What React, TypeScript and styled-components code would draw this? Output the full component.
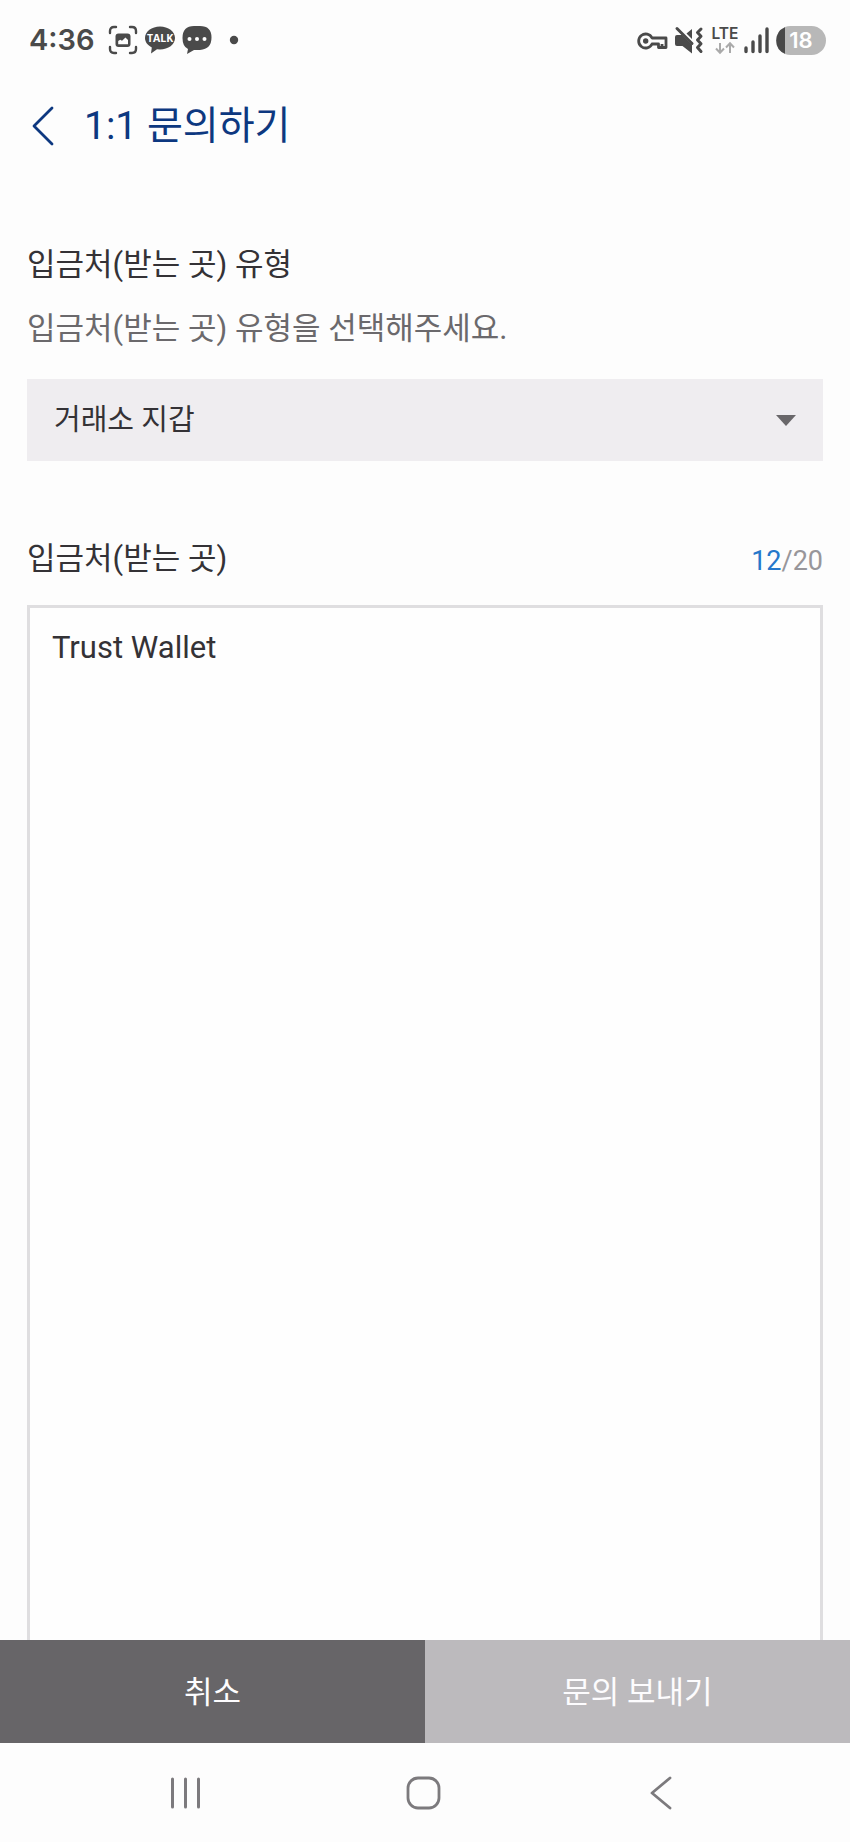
import { useState } from "react";
import styled, { createGlobalStyle } from "styled-components";

const GlobalStyle = createGlobalStyle`
  * { box-sizing: border-box; }
  body { margin: 0; background: #fdfdfd; }
  body, button, select, textarea {
    font-family: Roboto, "Noto Sans CJK KR", sans-serif;
  }
`;

const Screen = styled.div`
  display: flex;
  flex-direction: column;
  height: 100vh;
  color: #343236;
`;

const StatusBar = styled.div`
  display: flex;
  align-items: center;
  justify-content: space-between;
  height: 80px;
  padding: 0 24px 0 29px;
  color: #4a4a4a;
`;

const StatusGroup = styled.div<{ $gap: number }>`
  display: flex;
  align-items: center;
  gap: ${(p) => p.$gap}px;
  svg { display: block; }
`;

const Clock = styled.span`
  margin-right: 6px;
  font: 600 29px/40px Inter, sans-serif;
`;

const Header = styled.header`
  display: flex;
  align-items: center;
  gap: 24px;
  height: 92px;
  padding: 0 28px;
  color: #0d3880;
`;

const IconButton = styled.button`
  display: grid;
  place-items: center;
  padding: 0;
  border: 0;
  background: none;
  color: inherit;
  cursor: pointer;
`;

const Title = styled.h1`
  margin: 0;
  font-size: 39px;
  font-weight: 400;
  line-height: 56px;
`;

const Form = styled.form`
  display: flex;
  flex: 1;
  flex-direction: column;
  min-height: 0;
`;

const Fields = styled.div`
  display: flex;
  flex: 1;
  flex-direction: column;
  min-height: 0;
  padding: 73px 27px 0;
`;

const Label = styled.label`
  font-size: 31px;
  line-height: 40px;
`;

const Hint = styled.p`
  margin: 24px 0 30px;
  color: #6b696c;
  font-size: 31px;
  line-height: 40px;
`;

const SelectBox = styled.div`
  display: grid;
  align-items: center;
  margin-bottom: 76px;
  background: #efedf0;
  svg {
    grid-area: 1 / 1;
    justify-self: end;
    margin-right: 27px;
    pointer-events: none;
  }
`;

const Select = styled.select`
  grid-area: 1 / 1;
  width: 100%;
  height: 82px;
  padding: 0 60px 0 27px;
  border: 0;
  border-radius: 0;
  background: transparent;
  color: #343236;
  font-size: 29px;
  appearance: none;
`;

const LabelRow = styled.div`
  display: flex;
  align-items: center;
  justify-content: space-between;
  margin-bottom: 24px;
`;

const Counter = styled.span`
  padding-top: 4px;
  color: #98969a;
  font-size: 27px;
  line-height: 40px;
  b { color: #2577cb; font-weight: 400; }
`;

const TextArea = styled.textarea`
  flex: 1;
  width: 100%;
  min-height: 0;
  padding: 20px 22px;
  border: solid #dfdee0;
  border-width: 3px 3px 0;
  border-radius: 0;
  outline: 0;
  background: #fefefe;
  color: #343236;
  font-size: 31px;
  line-height: 40px;
  resize: none;
`;

const Actions = styled.div`
  display: grid;
  grid-template-columns: 1fr 1fr;
`;

const ActionButton = styled.button<{ $primary?: boolean }>`
  height: 103px;
  padding: 0 0 4px;
  border: 0;
  background: ${(p) => (p.$primary ? "#bcbabd" : "#676568")};
  color: #fdfcfe;
  font-size: 31px;
`;

const NavBar = styled.nav`
  display: flex;
  align-items: center;
  justify-content: space-between;
  height: 99px;
  padding: 0 168px 0 165px;
  color: #7c7a7d;
`;

const CaptureIcon = () => (
  <svg width="30" height="30" viewBox="0 0 30 30" fill="none" stroke="currentColor" strokeWidth="2.400" strokeLinecap="round">
    <path d="M2 8V6Q2 2 6 2H8M22 2h2q4 0 4 4v2M28 22v2q0 4-4 4h-2M8 28H6q-4 0-4-4v-2" />
    <rect x="7.500" y="8.500" width="15" height="13.500" rx="3" fill="currentColor" stroke="none" />
    <path d="M10.200 19.200v-3.200l2-1.300 1.800 1 3.500-3.200 2.500 2.500v4.200z" fill="#fdfdfd" stroke="none" />
  </svg>
);

const TalkIcon = () => (
  <svg width="30" height="30" viewBox="0 0 30 30">
    <path fill="currentColor" d="M15 1.500c8.300 0 15 5 15 11.500s-6.700 11.500-15 11.500l-3-.2-6 4.200.8-6.100C2.700 20.300 0 17 0 13 0 6.500 6.700 1.500 15 1.500z" />
    <text x="15" y="17" textAnchor="middle" fontFamily="Open Sans, sans-serif" fontWeight="700" fontSize="10.500" fill="#fff">TALK</text>
  </svg>
);

const MessageIcon = () => (
  <svg width="30" height="30" viewBox="0 0 30 30">
    <path fill="currentColor" d="M12 1h6q11.500 0 11.500 11.500T18 25h-6l-7 4 1-5Q.5 21.500.5 13 .5 1 12 1z" />
    <g fill="#fff"><circle cx="7.500" cy="14" r="2" /><circle cx="15" cy="14" r="2" /><circle cx="22.500" cy="14" r="2" /></g>
  </svg>
);

const DotIcon = () => (
  <svg width="30" height="30" viewBox="0 0 30 30"><circle cx="15" cy="15" r="4.200" fill="currentColor" /></svg>
);

const KeyIcon = () => (
  <svg width="31" height="30" viewBox="0 0 31 30" fill="none" stroke="currentColor" strokeWidth="2.800" strokeLinejoin="round">
    <path d="M15 13h14v9.500h-7.500V19H15a7 7 0 1 1 0-6zM25 19v3" />
    <circle cx="8.700" cy="16" r="2" fill="currentColor" strokeWidth="1.400" />
  </svg>
);

const MuteIcon = () => (
  <svg width="30" height="30" viewBox="0 0 30 30" fill="currentColor">
    <path d="M1 12q0-2 2-2h5l10 10v8.500L8.500 21H3q-2 0-2-2zM12.500 8.500L18 4v10z" />
    <path d="M3 3.500l15 15" stroke="currentColor" strokeWidth="3" strokeLinecap="round" />
    <path d="M27 4l-3.500 3.500 3.500 3.700-3.500 3.800 3.500 3.700-3.500 3.800 3.500 4" fill="none" stroke="currentColor" strokeWidth="3" strokeLinecap="round" strokeLinejoin="round" />
  </svg>
);

const LteIcon = () => (
  <svg width="28" height="30" viewBox="0 0 28 30">
    <text x="15" y="13.500" textAnchor="middle" fontFamily="Inter, sans-serif" fontWeight="600" fontSize="15.500" fill="currentColor">LTE</text>
    <path d="M10 18v9.500M6 23.500l4 4.200 4-4.200M20 28v-9.500M16 22.500l4-4.200 4 4.200" fill="none" stroke="#aaa" strokeWidth="2" />
  </svg>
);

const SignalIcon = () => (
  <svg width="26" height="30" viewBox="0 0 26 30" stroke="currentColor" strokeWidth="3.400" strokeLinecap="round">
    <path d="M2 23v3.500M9 17v9.500M16 11v15.500M23 4v22.500" />
  </svg>
);

const BatteryIcon = () => (
  <svg width="50" height="30" viewBox="0 0 50 30">
    <rect x="0" y="1" width="50" height="29" rx="14.500" fill="#b8b8b8" />
    <path d="M9 2.200v26.600A14.500 14.500 0 0 1 9 2.200z" fill="#484848" />
    <text x="25" y="23" textAnchor="middle" fontFamily="Inter, sans-serif" fontWeight="600" fontSize="22" fill="#fff">18</text>
  </svg>
);

const BackIcon = () => (
  <svg width="32" height="40" viewBox="0 0 32 40" fill="none" stroke="currentColor" strokeWidth="2.800" strokeLinecap="round" strokeLinejoin="round">
    <path d="M24 2L6 20l18 18" />
  </svg>
);

const RecentsIcon = () => (
  <svg width="40" height="40" viewBox="0 0 40 40" stroke="currentColor" strokeWidth="3" strokeLinecap="round">
    <path d="M7.500 6v28M20.500 6v28M33.500 6v28" />
  </svg>
);

const HomeIcon = () => (
  <svg width="40" height="40" viewBox="0 0 40 40" fill="none" stroke="currentColor" strokeWidth="2.800">
    <rect x="4" y="5" width="31" height="30" rx="10" />
  </svg>
);

const NavBackIcon = () => (
  <svg width="40" height="40" viewBox="0 0 40 40" fill="none" stroke="currentColor" strokeWidth="2.800" strokeLinecap="round" strokeLinejoin="round">
    <path d="M28 5L10 20l18 15" />
  </svg>
);

export default function App() {
  const [text, setText] = useState("Trust Wallet");

  return (
    <Screen>
      <GlobalStyle />
      <StatusBar>
        <StatusGroup $gap={7}>
          <Clock>4:36</Clock>
          <CaptureIcon />
          <TalkIcon />
          <MessageIcon />
          <DotIcon />
        </StatusGroup>
        <StatusGroup $gap={6}>
          <KeyIcon />
          <MuteIcon />
          <LteIcon />
          <SignalIcon />
          <BatteryIcon />
        </StatusGroup>
      </StatusBar>
      <Header>
        <IconButton type="button" aria-label="뒤로"><BackIcon /></IconButton>
        <Title>1:1 문의하기</Title>
      </Header>
      <Form onSubmit={(e) => e.preventDefault()}>
        <Fields>
          <Label htmlFor="kind">입금처(받는 곳) 유형</Label>
          <Hint>입금처(받는 곳) 유형을 선택해주세요.</Hint>
          <SelectBox>
            <Select id="kind" defaultValue="exchange">
              <option value="exchange">거래소 지갑</option>
            </Select>
            <svg width="20" height="11" viewBox="0 0 20 11"><path d="M0 0h20L10 11z" fill="#69676a" /></svg>
          </SelectBox>
          <LabelRow>
            <Label htmlFor="place">입금처(받는 곳)</Label>
            <Counter><b>{text.length}</b>/20</Counter>
          </LabelRow>
          <TextArea id="place" maxLength={20} value={text} onChange={(e) => setText(e.target.value)} />
        </Fields>
        <Actions>
          <ActionButton type="button">취소</ActionButton>
          <ActionButton type="submit" $primary>문의 보내기</ActionButton>
        </Actions>
      </Form>
      <NavBar>
        <IconButton type="button" aria-label="최근 앱"><RecentsIcon /></IconButton>
        <IconButton type="button" aria-label="홈"><HomeIcon /></IconButton>
        <IconButton type="button" aria-label="이전"><NavBackIcon /></IconButton>
      </NavBar>
    </Screen>
  );
}
